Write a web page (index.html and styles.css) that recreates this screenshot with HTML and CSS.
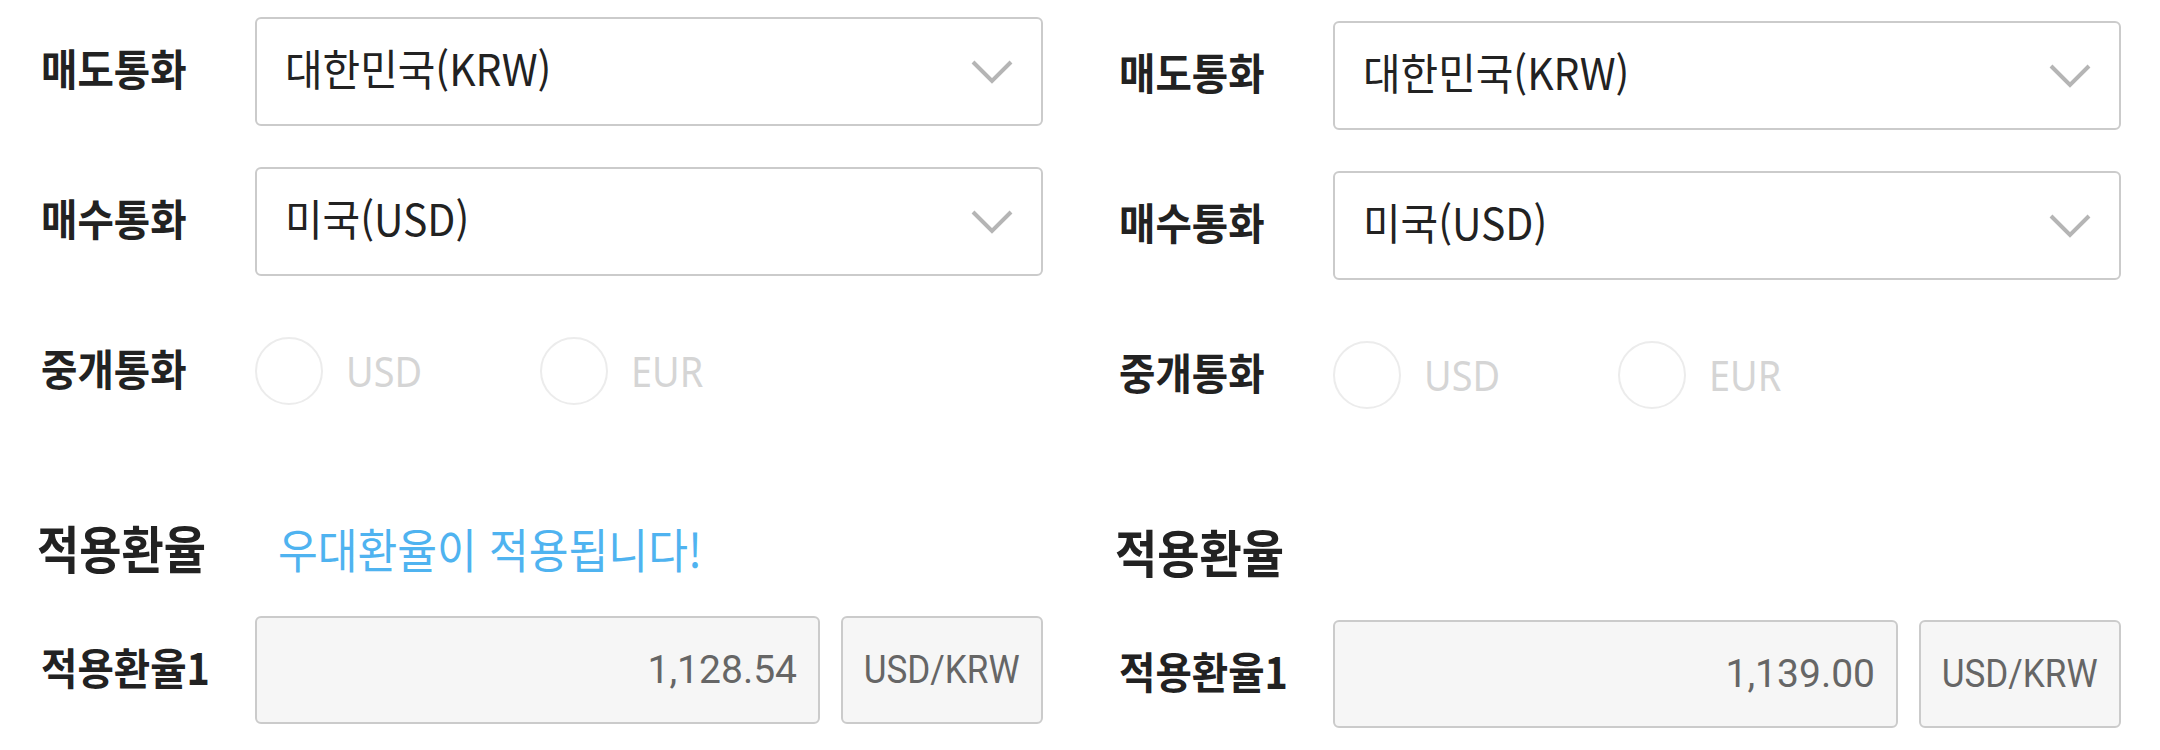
FILE: index.html
```html
<!DOCTYPE html>
<html lang="ko">
<head>
<meta charset="utf-8">
<title>환율 계산</title>
<link rel="stylesheet" href="styles.css">
</head>
<body>
<main class="page">
  <section class="panel">
    <div class="row row-select">
      <span class="label"><span class="cx">매도통화</span></span>
      <div class="select">
        <span class="cx select-text">대한민국(KRW)</span>
        <svg class="chev" viewBox="0 0 42 24" width="42" height="24"><polyline points="2,2 21,21 40,2" fill="none" stroke="#b5b5b5" stroke-width="4"/></svg>
      </div>
    </div>
    <div class="row row-select">
      <span class="label"><span class="cx">매수통화</span></span>
      <div class="select">
        <span class="cx select-text">미국(USD)</span>
        <svg class="chev" viewBox="0 0 42 24" width="42" height="24"><polyline points="2,2 21,21 40,2" fill="none" stroke="#b5b5b5" stroke-width="4"/></svg>
      </div>
    </div>
    <div class="row row-radio">
      <span class="label"><span class="cx">중개통화</span></span>
      <div class="radios">
        <label class="radio"><span class="circle"></span><span class="cx-l radio-text">USD</span></label>
        <label class="radio"><span class="circle"></span><span class="cx-l radio-text">EUR</span></label>
      </div>
    </div>
    <div class="row row-head">
      <h2 class="heading"><span class="cx">적용환율</span></h2>
      <span class="notice"><span class="cx">우대환율이 적용됩니다!</span></span>
    </div>
    <div class="row row-rate">
      <span class="label"><span class="cx">적용환율1</span></span>
      <div class="rate-field"><span class="value">1,128.54</span></div>
      <div class="unit-field"><span class="cx-c unit">USD/KRW</span></div>
    </div>
  </section>

  <section class="panel panel-b">
    <div class="row row-select">
      <span class="label"><span class="cx">매도통화</span></span>
      <div class="select">
        <span class="cx select-text">대한민국(KRW)</span>
        <svg class="chev" viewBox="0 0 42 24" width="42" height="24"><polyline points="2,2 21,21 40,2" fill="none" stroke="#b5b5b5" stroke-width="4"/></svg>
      </div>
    </div>
    <div class="row row-select">
      <span class="label"><span class="cx">매수통화</span></span>
      <div class="select">
        <span class="cx select-text">미국(USD)</span>
        <svg class="chev" viewBox="0 0 42 24" width="42" height="24"><polyline points="2,2 21,21 40,2" fill="none" stroke="#b5b5b5" stroke-width="4"/></svg>
      </div>
    </div>
    <div class="row row-radio">
      <span class="label"><span class="cx">중개통화</span></span>
      <div class="radios">
        <label class="radio"><span class="circle"></span><span class="cx-l radio-text">USD</span></label>
        <label class="radio"><span class="circle"></span><span class="cx-l radio-text">EUR</span></label>
      </div>
    </div>
    <div class="row row-head">
      <h2 class="heading"><span class="cx">적용환율</span></h2>
    </div>
    <div class="row row-rate">
      <span class="label"><span class="cx">적용환율1</span></span>
      <div class="rate-field"><span class="value">1,139.00</span></div>
      <div class="unit-field"><span class="cx-c unit">USD/KRW</span></div>
    </div>
  </section>
</main>
</body>
</html>
```
FILE: styles.css
```css
* { box-sizing: border-box; }
html, body { margin: 0; padding: 0; background: #fff; }
body {
  font-family: "Noto Sans CJK KR", "Noto Sans", sans-serif;
  color: #222;
}
.page {
  display: grid;
  grid-template-columns: 1078px 1078px;
  width: 2160px;
}
.panel {
  padding: 17px 35px 0 41px;
}
.panel-b { padding-top: 21px; }

/* the reference face is a little narrower than Noto, so text is condensed */
.cx, .cx-l, .cx-c {
  display: inline-block;
  white-space: nowrap;
  line-height: 1;
}
.cx {
  transform: translateY(-4px) scaleX(var(--sx, 0.92));
  transform-origin: left center;
}
.cx-l {
  transform: scaleX(0.9);
  transform-origin: left center;
}
.cx-c {
  transform: scaleX(0.9);
  transform-origin: center center;
}

.row {
  display: flex;
  align-items: center;
}
.label {
  width: 214px;
  flex: none;
  font-size: 43px;
  font-weight: 700;
  color: #222;
  line-height: 1;
}
.row-select { height: 109px; }
.row-select + .row-select { margin-top: 41px; }

.select {
  flex: 1;
  height: 109px;
  border: 2px solid #cbcbcb;
  border-radius: 6px;
  background: #fff;
  display: flex;
  align-items: center;
  justify-content: space-between;
  padding: 0 28px 0 28px;
}
.select-text {
  --sx: 0.95;
  font-size: 43px;
  font-weight: 400;
  color: #222;
}
.chev { display: block; flex: none; }

.row-radio { height: 70px; margin-top: 60px; }
.radios { display: flex; align-items: center; }
.radio {
  display: flex;
  align-items: center;
  width: 285px;
}
.circle {
  width: 68px;
  height: 68px;
  border-radius: 50%;
  border: 2px solid #ececec;
  flex: none;
  margin-right: 23px;
}
.radio-text {
  font-family: "Noto Sans", sans-serif;
  font-size: 42px;
  color: #d5d5d5;
}

.row-head { height: 60px; margin-top: 115px; }
.heading {
  margin: 0 0 0 -4px;
  width: 241px;
  flex: none;
  font-size: 51px;
  font-weight: 700;
  color: #222;
  line-height: 1;
}
.heading .cx { --sx: 0.9; }
.notice {
  font-size: 47px;
  font-weight: 400;
  color: #4fb3f0;
  line-height: 1;
}
.notice .cx { --sx: 0.92; }

.row-rate { height: 108px; margin-top: 35px; }
.rate-field, .unit-field {
  height: 108px;
  border: 2px solid #cbcbcb;
  border-radius: 6px;
  background: #f6f6f6;
  display: flex;
  align-items: center;
}
.rate-field {
  flex: 1;
  justify-content: flex-end;
  padding-right: 21px;
}
.unit-field {
  width: 202px;
  flex: none;
  margin-left: 21px;
  justify-content: center;
}
.value {
  font-family: Roboto, "Liberation Sans", sans-serif;
  font-size: 39px;
  color: #666;
  line-height: 1;
}
.unit {
  font-family: Roboto, "Liberation Sans", sans-serif;
  font-size: 39px;
  color: #666;
}
```
